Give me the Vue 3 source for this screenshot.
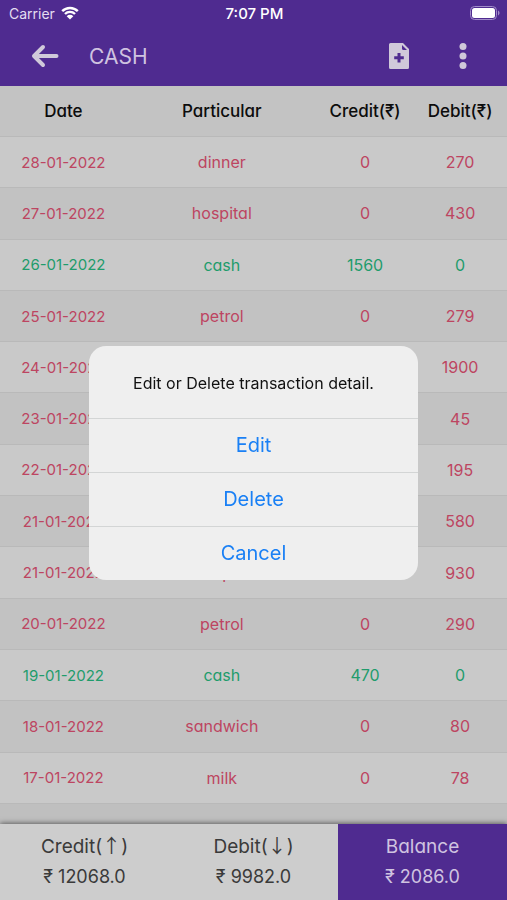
<script setup>
const entries = [
  { date: '28-01-2022', name: 'dinner', credit: 0, debit: 270 },
  { date: '27-01-2022', name: 'hospital', credit: 0, debit: 430 },
  { date: '26-01-2022', name: 'cash', credit: 1560, debit: 0 },
  { date: '25-01-2022', name: 'petrol', credit: 0, debit: 279 },
  { date: '24-01-2022', name: 'dinner', credit: 0, debit: 1900 },
  { date: '23-01-2022', name: 'milk', credit: 0, debit: 45 },
  { date: '22-01-2022', name: 'lunch', credit: 0, debit: 195 },
  { date: '21-01-2022', name: 'shoes', credit: 0, debit: 580 },
  { date: '21-01-2022', name: 'carpet', credit: 0, debit: 930 },
  { date: '20-01-2022', name: 'petrol', credit: 0, debit: 290 },
  { date: '19-01-2022', name: 'cash', credit: 470, debit: 0 },
  { date: '18-01-2022', name: 'sandwich', credit: 0, debit: 80 },
  { date: '17-01-2022', name: 'milk', credit: 0, debit: 78 },
]
</script>

<template>
  <div class="screen">
    <header class="top">
      <div class="status">
        <span class="carrier">
          Carrier
          <svg class="wifi" viewBox="0 0 18 14" aria-hidden="true">
            <path d="M1.2 5.2a11 11 0 0 1 15.6 0M4 8a7 7 0 0 1 10 0" fill="none" stroke="#fff" stroke-width="2.4" />
            <path d="M9 13.6 5.7 10.2a4.7 4.7 0 0 1 6.6 0z" fill="#fff" />
          </svg>
        </span>
        <span class="clock">7:07 PM</span>
        <svg class="battery" viewBox="0 0 30 14" aria-hidden="true">
          <rect x="0.5" y="0.5" width="26" height="13" rx="4" fill="none" stroke="#a18bc9" />
          <rect x="2" y="2" width="23" height="10" rx="2.5" fill="#fff" />
          <path d="M28 4.6c2 .8 2 4 0 4.8z" fill="#a18bc9" />
        </svg>
      </div>
      <div class="bar">
        <button class="icon" type="button" aria-label="Back">
          <svg width="28" height="24" viewBox="0 0 28 24">
            <path d="M25.5 12H3.5M12 3 3 12l9 9" fill="none" stroke="#d0c9da" stroke-width="4" stroke-linecap="round" stroke-linejoin="round" />
          </svg>
        </button>
        <h1>CASH</h1>
        <button class="icon" type="button" aria-label="Add entry">
          <svg width="20" height="26" viewBox="0 0 20 26">
            <path fill-rule="evenodd" fill="#d0c9da" d="M1.5 0H14l6 6v18.500a1.500 1.500 0 0 1-1.500 1.500h-17a1.500 1.500 0 0 1-1.500-1.500v-23A1.500 1.500 0 0 1 1.500 0zM13 2v3.500a1.500 1.500 0 0 0 1.500 1.500H18zM8.500 10v3.200H5.200v3h3.300v3.300h3v-3.300h3.300v-3h-3.300V10z" />
          </svg>
        </button>
        <button class="icon" type="button" aria-label="More options">
          <svg width="8" height="28" viewBox="0 0 8 28">
            <g fill="#d0c9da"><circle cx="4" cy="4.500" r="3.500" /><circle cx="4" cy="14" r="3.500" /><circle cx="4" cy="23.500" r="3.500" /></g>
          </svg>
        </button>
      </div>
    </header>

    <main class="ledger">
      <table>
        <thead>
          <tr>
            <th class="c-date">Date</th>
            <th class="c-name">Particular</th>
            <th class="c-credit">Credit(₹)</th>
            <th class="c-debit">Debit(₹)</th>
          </tr>
        </thead>
        <tbody>
          <tr v-for="(e, i) in entries" :key="i" :class="e.credit ? 'in' : 'out'">
            <td>{{ e.date }}</td>
            <td>{{ e.name }}</td>
            <td>{{ e.credit }}</td>
            <td>{{ e.debit }}</td>
          </tr>
        </tbody>
      </table>
    </main>

    <footer class="totals">
      <div><span>Credit(<span class="arrow">↑</span>)</span><span class="sum">₹ 12068.0</span></div>
      <div><span>Debit(<span class="arrow">↓</span>)</span><span class="sum">₹ 9982.0</span></div>
      <div class="balance"><span>Balance</span><span class="sum">₹ 2086.0</span></div>
    </footer>

    <div class="overlay">
      <div class="alert" role="alertdialog" aria-modal="true" aria-labelledby="alert-text">
        <p id="alert-text">Edit or Delete transaction detail.</p>
        <button type="button">Edit</button>
        <button type="button">Delete</button>
        <button type="button">Cancel</button>
      </div>
    </div>
  </div>
</template>

<style>
body {
  background: #bdbdbd;
}
</style>

<style scoped>
.screen {
  display: flex;
  flex-direction: column;
  min-height: 100vh;
  background: #bfbfbf;
  font-family: Inter, "Liberation Sans", sans-serif;
  font-feature-settings: "cv11";
}
button {
  border: 0;
  padding: 0;
  background: none;
  font: inherit;
  cursor: pointer;
}
svg {
  display: block;
}
.top {
  background: #4f2b90;
}
.status {
  display: grid;
  grid-template-columns: 1fr auto 1fr;
  align-items: center;
  height: 26px;
  padding: 0 7px 0 9px;
  color: #fff;
  font-size: 14px;
  font-feature-settings: normal;
}
.carrier {
  display: flex;
  align-items: center;
  gap: 6px;
  color: #e4ddf0;
}
.wifi {
  width: 18px;
  height: 14px;
}
.clock {
  font-size: 15px;
  font-weight: 500;
}
.battery {
  width: 30px;
  height: 14px;
  justify-self: end;
}
.bar {
  display: flex;
  align-items: center;
  height: 60px;
  padding: 0 24px 0 25px;
}
.icon {
  display: grid;
  place-items: center;
  width: 40px;
  height: 40px;
}
.icon + .icon {
  margin-left: 24px;
}
h1 {
  flex: 1;
  margin: 0;
  padding-left: 24px;
  color: #cfc3e0;
  font-size: 21px;
  font-weight: 400;
}
.ledger {
  flex: 1;
  display: grid;
  padding-bottom: 20px;
}
table {
  width: 100%;
  table-layout: fixed;
  border-collapse: collapse;
  text-align: center;
}
th,
td {
  height: 50px;
  padding: 0;
  border-bottom: 1px solid #b9b9b9;
  white-space: nowrap;
}
th {
  color: #0c0c0c;
  font-size: 17px;
  font-weight: 500;
}
td {
  font-size: 16px;
  font-weight: 400;
}
td:first-child {
  font-size: 15px;
}
thead tr {
  background: #c3c3c3;
}
tbody tr:nth-child(odd) {
  background: #c9c9c9;
}
tbody tr:nth-child(even) {
  background: #c2c2c2;
}
.c-date {
  width: 25%;
}
.c-name {
  width: 37.5%;
}
.c-credit {
  width: 19%;
}
.c-debit {
  width: 18.5%;
}
.out {
  color: #bd4561;
}
.in {
  color: #1f9c6c;
}
.totals {
  display: grid;
  grid-template-columns: repeat(3, 1fr);
  background: #cdcdcd;
  color: #3a3a3a;
  box-shadow: 0 -1px 5px rgba(0, 0, 0, 0.5);
  font-size: 19px;
  line-height: 30px;
}
.totals div {
  display: flex;
  flex-direction: column;
  align-items: center;
  padding: 8px 0;
}
.totals span {
  height: 30px;
}
.sum {
  font-size: 18px;
}
.arrow {
  font-family: "Noto Sans CJK JP", sans-serif;
  line-height: 1;
}
.totals .balance {
  background: #4f2b90;
  color: #cfc3e0;
}
.overlay {
  position: fixed;
  inset: 0;
  display: grid;
  place-items: center;
  padding-top: 25px;
}
.alert {
  display: flex;
  flex-direction: column;
  width: 65%;
  overflow: hidden;
  border-radius: 17px;
  background: #efefef;
  font-feature-settings: normal;
}
.alert p {
  margin: 0;
  padding: 27px 16px 25px;
  color: #111;
  font-size: 16px;
  line-height: 20px;
  text-align: center;
}
.alert button {
  height: 54px;
  border-top: 1px solid #d3d5d5;
  color: #1a80f5;
  font-size: 20px;
}
</style>
